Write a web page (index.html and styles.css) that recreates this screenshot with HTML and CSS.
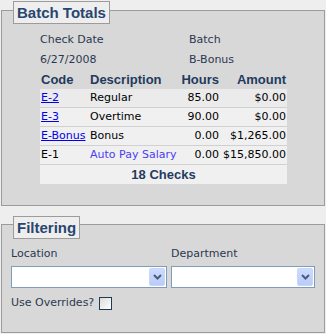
FILE: index.html
```html
<!DOCTYPE html>
<html lang="en">
<head>
    <meta charset="UTF-8">
    <title>Batch Totals</title>
    <link rel="stylesheet" href="styles.css">
</head>
<body>
    <div class="page">
        <section class="panel batch">
            <div class="panel-title">Batch Totals</div>

            <div class="info">
                <span>Check Date</span>
                <span>Batch</span>
                <span>6/27/2008</span>
                <span>B-Bonus</span>
            </div>

            <table class="totals">
                <colgroup>
                    <col class="col-code">
                    <col class="col-desc">
                    <col class="col-hours">
                    <col class="col-amount">
                </colgroup>
                <thead>
                    <tr>
                        <th class="left">Code</th>
                        <th class="left">Description</th>
                        <th>Hours</th>
                        <th>Amount</th>
                    </tr>
                </thead>
                <tbody>
                    <tr>
                        <td><a href="#">E-2</a></td>
                        <td>Regular</td>
                        <td class="num">85.00</td>
                        <td class="num">$0.00</td>
                    </tr>
                    <tr>
                        <td><a href="#">E-3</a></td>
                        <td>Overtime</td>
                        <td class="num">90.00</td>
                        <td class="num">$0.00</td>
                    </tr>
                    <tr>
                        <td><a href="#">E-Bonus</a></td>
                        <td>Bonus</td>
                        <td class="num">0.00</td>
                        <td class="num">$1,265.00</td>
                    </tr>
                    <tr>
                        <td>E-1</td>
                        <td class="auto">Auto Pay Salary</td>
                        <td class="num">0.00</td>
                        <td class="num">$15,850.00</td>
                    </tr>
                </tbody>
                <tfoot>
                    <tr>
                        <td colspan="4">18 Checks</td>
                    </tr>
                </tfoot>
            </table>
        </section>

        <section class="panel filter">
            <div class="panel-title">Filtering</div>

            <div class="filter-grid">
                <div class="field">
                    <label>Location</label>
                    <div class="combo location">
                        <span class="combo-value"></span>
                        <span class="combo-btn">
                            <svg width="9" height="6" viewBox="0 0 9 6"><path d="M1 1 L4.5 4.5 L8 1" fill="none" stroke="#4a5d80" stroke-width="2"/></svg>
                        </span>
                    </div>
                </div>
                <div class="field">
                    <label>Department</label>
                    <div class="combo">
                        <span class="combo-value"></span>
                        <span class="combo-btn">
                            <svg width="9" height="6" viewBox="0 0 9 6"><path d="M1 1 L4.5 4.5 L8 1" fill="none" stroke="#4a5d80" stroke-width="2"/></svg>
                        </span>
                    </div>
                </div>
            </div>

            <div class="overrides">
                <span>Use Overrides?</span>
                <span class="check"></span>
            </div>
        </section>
    </div>
</body>
</html>
```

FILE: styles.css
```css
* {
    margin: 0;
    padding: 0;
    box-sizing: border-box;
}

body {
    background-color: #eeeeee;
    font-family: "DejaVu Sans", sans-serif;
    font-size: 11px;
    color: #2b3852;
}

.page {
    padding: 0 1px;
}

.panel {
    border: 1px solid #9c9c9c;
    background-color: #d8d8d8;
    padding: 0 9px;
}

.batch {
    margin-top: 10px;
    padding-bottom: 21px;
}

.filter {
    margin-top: 18px;
    padding-bottom: 20px;
}

.panel-title {
    width: fit-content;
    margin: -10px 0 0 2px;
    padding: 0 3px;
    border: 1px solid #9c9c9c;
    background-color: #eeeeee;
    font-family: "Liberation Sans", Arial, sans-serif;
    font-size: 15px;
    font-weight: bold;
    line-height: 21px;
    color: #284670;
}

.filter .panel-title {
    margin-top: -9px;
}

/* batch info */
.info {
    display: grid;
    grid-template-columns: 149px auto;
    margin: 6px 0 0 29px;
    line-height: 20px;
}

.totals {
    width: 247px;
    margin-left: 29px;
    border-collapse: collapse;
    white-space: nowrap;
    color: #000;
}

.col-code { width: 49px; }
.col-desc { width: 90px; }
.col-hours { width: 41px; }
.col-amount { width: 67px; }

.totals th {
    font-family: "Liberation Sans", Arial, sans-serif;
    font-size: 13px;
    font-weight: bold;
    color: #1f3b5e;
    text-align: right;
    line-height: 19px;
    padding: 0 1px;
}

.totals th.left {
    text-align: left;
}

.totals td {
    background-color: #f0f0f0;
    border-bottom: 1px solid #d0d0d0;
    line-height: 18px;
    padding: 0 1px;
}

.totals tbody tr:first-child td {
    background-color: #ebebeb;
}

.totals td.num {
    text-align: right;
}

.totals a {
    color: #0000ee;
}

.totals .auto {
    color: #4c3df5;
}

.totals tfoot td {
    border-bottom: none;
    text-align: center;
    font-family: "Liberation Sans", Arial, sans-serif;
    font-size: 13px;
    font-weight: bold;
    color: #1f3b5e;
    line-height: 19px;
}

/* filtering */
.filter-grid {
    display: grid;
    grid-template-columns: 160px 1fr;
    margin-top: 7px;
}

.field label {
    display: block;
    line-height: 16px;
    margin-bottom: 4px;
}

.combo {
    display: flex;
    height: 22px;
    border: 1px solid #7f9db9;
    background-color: #fff;
    padding: 1px;
}

.combo.location {
    width: 156px;
}

.combo-value {
    flex: 1;
}

.combo-btn {
    width: 16px;
    display: flex;
    align-items: center;
    justify-content: center;
    background: linear-gradient(#cddbff, #b9cbf8);
    border: 1px solid #c9d6f5;
    border-radius: 2px;
}

.overrides {
    display: flex;
    align-items: center;
    gap: 5px;
    margin-top: 6px;
    line-height: 18px;
}

.check {
    width: 13px;
    height: 13px;
    border: 1px solid #1c3a5e;
    background: linear-gradient(135deg, #dcdcd6, #ffffff);
}
```
